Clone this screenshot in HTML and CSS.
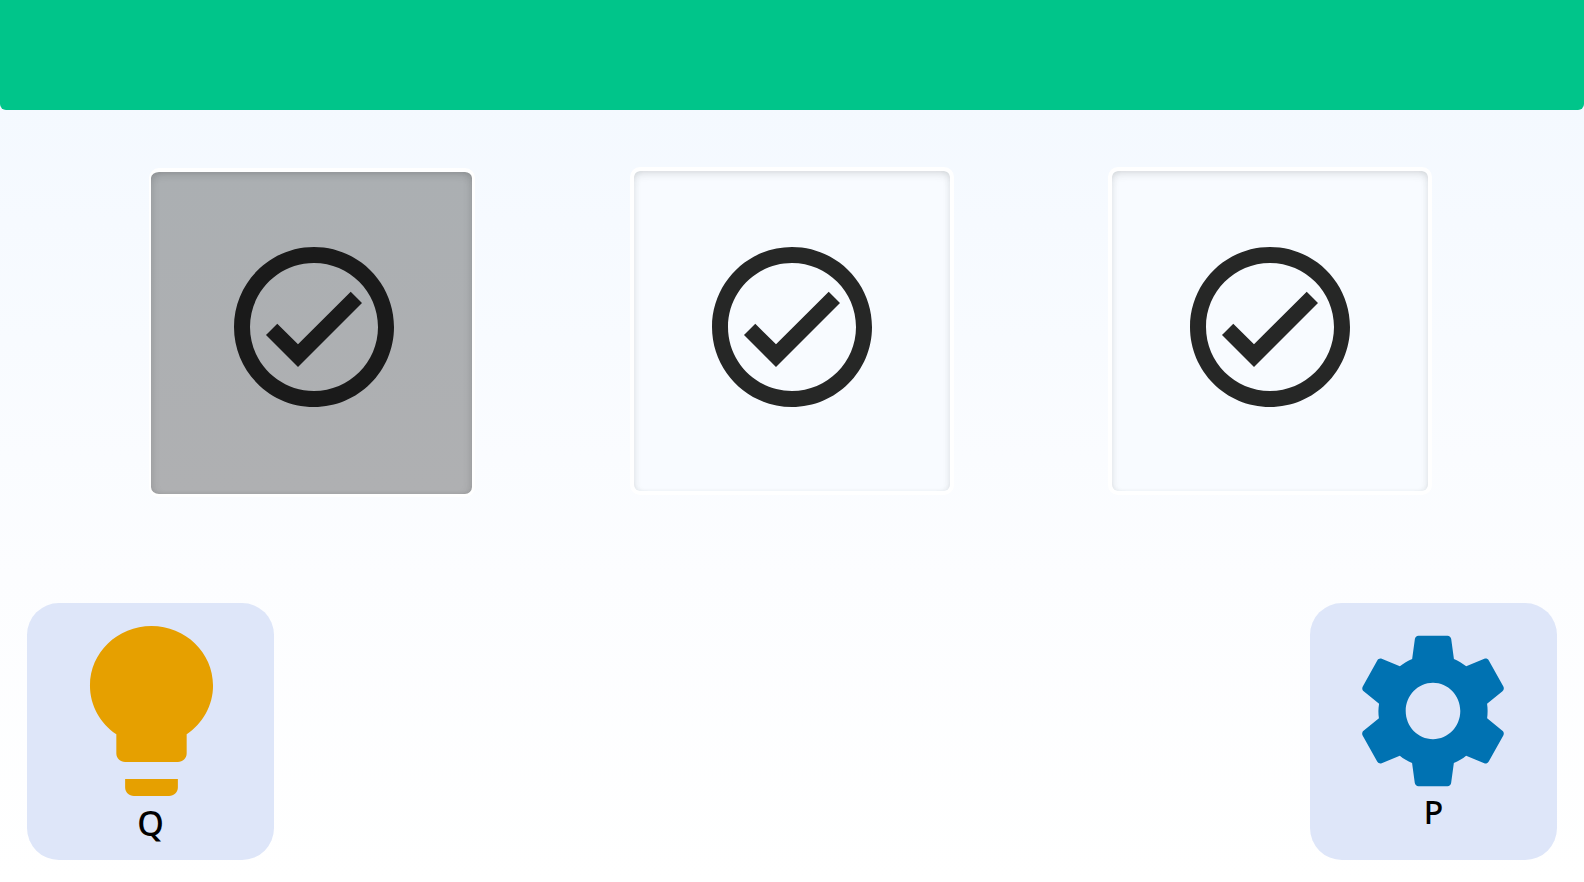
FILE: index.html
```html
<!DOCTYPE html>
<html lang="en">
<head>
<meta charset="utf-8">
<title>Quiz</title>
<link rel="stylesheet" href="styles.css">
</head>
<body>
<header class="topbar"></header>
<main class="choices">
  <button class="choice choice-selected">
    <svg class="check" viewBox="0 0 24 24"><path d="M12 2C6.48 2 2 6.48 2 12s4.48 10 10 10 10-4.48 10-10S17.52 2 12 2zm0 18c-4.41 0-8-3.59-8-8s3.59-8 8-8 8 3.59 8 8-3.59 8-8 8zm4.59-12.42L10 14.17l-2.59-2.58L6 13l4 4 8-8z"/></svg>
  </button>
  <button class="choice choice-two">
    <svg class="check" viewBox="0 0 24 24"><path d="M12 2C6.48 2 2 6.48 2 12s4.48 10 10 10 10-4.48 10-10S17.52 2 12 2zm0 18c-4.41 0-8-3.59-8-8s3.59-8 8-8 8 3.59 8 8-3.59 8-8 8zm4.59-12.42L10 14.17l-2.59-2.58L6 13l4 4 8-8z"/></svg>
  </button>
  <button class="choice choice-three">
    <svg class="check" viewBox="0 0 24 24"><path d="M12 2C6.48 2 2 6.48 2 12s4.48 10 10 10 10-4.48 10-10S17.52 2 12 2zm0 18c-4.41 0-8-3.59-8-8s3.59-8 8-8 8 3.59 8 8-3.59 8-8 8zm4.59-12.42L10 14.17l-2.59-2.58L6 13l4 4 8-8z"/></svg>
  </button>
</main>
<footer class="actions">
  <button class="action action-hint">
    <svg class="bulb" viewBox="0 0 24 24" preserveAspectRatio="none"><path d="M9 21c0 .55.45 1 1 1h4c.55 0 1-.45 1-1v-1H9v1zm3-19C8.14 2 5 5.14 5 9c0 2.38 1.19 4.47 3 5.74V17c0 .55.45 1 1 1h6c.55 0 1-.45 1-1v-2.26c1.81-1.27 3-3.36 3-5.74 0-3.86-3.14-7-7-7z"/></svg>
    <span class="key key-q">Q</span>
  </button>
  <button class="action action-settings">
    <svg class="gear" viewBox="0 0 24 24" preserveAspectRatio="none"><path d="M19.14 12.94c.04-.3.06-.61.06-.94 0-.32-.02-.64-.07-.94l2.03-1.58c.18-.14.23-.41.12-.61l-1.92-3.32c-.12-.22-.37-.29-.59-.22l-2.39.96c-.5-.38-1.03-.7-1.62-.94l-.36-2.54c-.04-.24-.24-.41-.48-.41h-3.84c-.24 0-.43.17-.47.41l-.36 2.54c-.59.24-1.13.57-1.62.94l-2.39-.96c-.22-.08-.47 0-.59.22L2.74 8.87c-.12.21-.08.47.12.61l2.03 1.58c-.05.3-.09.63-.09.94s.02.64.07.94l-2.03 1.58c-.18.14-.23.41-.12.61l1.92 3.32c.12.22.37.29.59.22l2.39-.96c.5.38 1.03.7 1.62.94l.36 2.54c.05.24.24.41.48.41h3.84c.24 0 .44-.17.47-.41l.36-2.54c.59-.24 1.13-.56 1.62-.94l2.39.96c.22.08.47 0 .59-.22l1.92-3.32c.12-.22.07-.47-.12-.61l-2.01-1.58zM12 15.6c-1.98 0-3.6-1.62-3.6-3.6s1.62-3.6 3.6-3.6 3.6 1.62 3.6 3.6-1.62 3.6-3.6 3.6z"/></svg>
    <span class="key key-p">P</span>
  </button>
</footer>
</body>
</html>
```
FILE: styles.css
```css
* { box-sizing: border-box; }
html, body { height: 100%; }
body {
  margin: 0;
  height: 882px;
  overflow: hidden;
  display: flex;
  flex-direction: column;
  background: linear-gradient(180deg, #f4f9ff 0, #f4f9ff 12%, #fcfdff 65%, #ffffff 100%);
  font-family: "Noto Sans", "Inter", sans-serif;
}
.topbar {
  height: 110px;
  flex: none;
  background: #00c58a;
  border-radius: 0 0 6px 6px;
}
.choices {
  flex: none;
  display: flex;
  align-items: flex-start;
  padding: 57px 0 0 149px;
  height: 493px;
}
button {
  padding: 0;
  margin: 0;
  border: 0;
  background: none;
  font: inherit;
}
.choice {
  display: flex;
  align-items: center;
  justify-content: center;
  flex: none;
  padding-bottom: 8px;
  background: #f8fbff;
  border: 4px solid #ffffff;
  border-radius: 10px;
  box-shadow: inset 0 5px 8px -3px rgba(60, 64, 67, .18), inset 5px 0 7px -4px rgba(60, 64, 67, .07), inset -5px 0 7px -4px rgba(60, 64, 67, .07), inset 0 -3px 5px -3px rgba(60, 64, 67, .04);
}
.choice-selected {
  width: 326px;
  height: 329px;
  margin-top: 1px;
  padding-left: 5px;
  padding-bottom: 12px;
  background: linear-gradient(180deg, #abafb2 0, #afb0b2 100%);
  border-width: 4px 3px 3px 2px;
  box-shadow: inset 0 5px 8px -3px rgba(30, 30, 30, .18), inset 6px 0 8px -4px rgba(30, 30, 30, .08), inset -6px 0 8px -4px rgba(30, 30, 30, .08), inset 0 -3px 5px -3px rgba(30, 30, 30, .06);
}
.choice-two {
  width: 324px;
  height: 328px;
  margin-left: 155px;
}
.choice-three {
  width: 324px;
  height: 328px;
  margin-left: 154px;
}
.check { width: 192px; height: 192px; fill: #262726; flex: none; }
.choice-selected .check { fill: #1a1a1a; }
.actions {
  flex: none;
  display: flex;
  justify-content: space-between;
  padding: 0 27px;
}
.action {
  width: 247px;
  height: 257px;
  display: flex;
  flex-direction: column;
  align-items: center;
  background: #dee6f9;
  border-radius: 32px;
}
.action-hint { padding-top: 6px; }
.action-settings { padding-top: 14px; }
.bulb { width: 211px; height: 204px; fill: #e6a000; flex: none; margin-left: 2px; }
.gear { width: 182px; height: 188px; fill: #0072b2; flex: none; margin-right: 2px; }
.key {
  font-weight: 500;
  color: #000;
}
.key-q { margin-top: -7px; font-size: 34px; line-height: 34px; }
.key-p { margin-top: -9px; font-size: 32px; line-height: 32px; }
```
